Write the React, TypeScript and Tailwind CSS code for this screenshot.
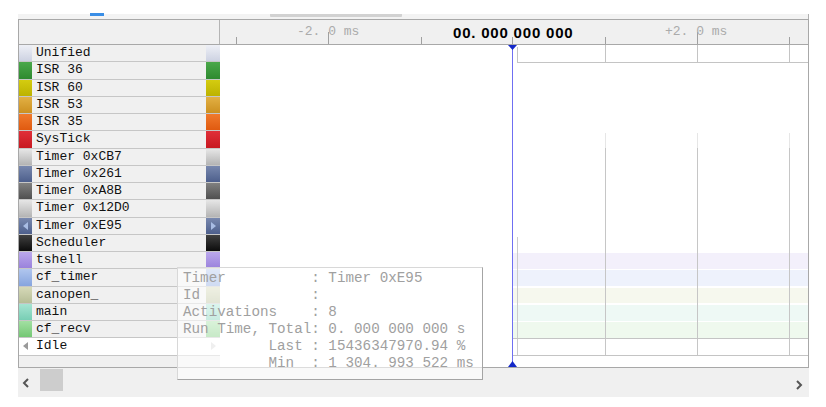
import React from "react";

type Row = {
  name: string;
  from: string;
  to: string;
  band?: string;
  mark?: "blue" | "idle";
};

const ROWS: Row[] = [
  { name: "Unified", from: "#eef0f6", to: "#cdd2e2" },
  { name: "ISR 36", from: "#4aa84a", to: "#2f8a30" },
  { name: "ISR 60", from: "#d4cc10", to: "#bcb200" },
  { name: "ISR 53", from: "#e2b044", to: "#cc9020" },
  { name: "ISR 35", from: "#f07a2c", to: "#e05a10" },
  { name: "SysTick", from: "#e0303a", to: "#c81820" },
  { name: "Timer 0xCB7", from: "#e6e6e6", to: "#b4b4b4" },
  { name: "Timer 0x261", from: "#7888ae", to: "#4d5f8c" },
  { name: "Timer 0xA8B", from: "#808080", to: "#505050" },
  { name: "Timer 0x12D0", from: "#e6e6e6", to: "#b4b4b4" },
  { name: "Timer 0xE95", from: "#7888ae", to: "#4d5f8c", mark: "blue" },
  { name: "Scheduler", from: "#404040", to: "#0c0c0c" },
  { name: "tshell", from: "#bba8ec", to: "#9a82dc", band: "#f3f0fb" },
  { name: "cf_timer", from: "#b0c6ee", to: "#86a4de", band: "#eef2fc" },
  { name: "canopen_", from: "#d6d9b8", to: "#b6bd96", band: "#f6f8ee" },
  { name: "main", from: "#a6e4d2", to: "#78ceb4", band: "#eef9f5" },
  { name: "cf_recv", from: "#a2e0a2", to: "#74c874", band: "#eff9ee" },
  { name: "Idle", from: "#ffffff", to: "#ffffff", mark: "idle" },
];

const RH = 17.25;
const GRID = [385, 477, 569];

function Arrow({ dir, color }: { dir: "l" | "r"; color: string }) {
  return (
    <svg width="6" height="8" viewBox="0 0 6 8">
      <polygon points={dir === "l" ? "5,0 5,8 0,4" : "1,0 1,8 6,4"} fill={color} />
    </svg>
  );
}

function Swatch({ row, side }: { row: Row; side: "l" | "r" }) {
  const w = side === "l" ? "w-[13px]" : "w-[14px]";
  return (
    <div
      className={`${w} h-full flex items-center justify-center shrink-0`}
      style={{ background: `linear-gradient(to bottom, ${row.from}, ${row.to})` }}
    >
      {row.mark === "blue" && <Arrow dir={side} color="#a9bde4" />}
      {row.mark === "idle" && <Arrow dir={side} color={side === "l" ? "#9a9a9a" : "#d6d6d6"} />}
    </div>
  );
}

function TimelineBody() {
  return (
    <svg width="588" height="322" className="block" shapeRendering="crispEdges">
      {/* unified row grid */}
      <line x1="297.5" y1="2" x2="297.5" y2="17" stroke="#c4c4c4" />
      {GRID.map((x) => (
        <line key={x} x1={x + 0.5} y1="0" x2={x + 0.5} y2="17" stroke="#c4c4c4" />
      ))}
      <line x1="297" y1="17.5" x2="588" y2="17.5" stroke="#c4c4c4" />

      {/* bands */}
      {ROWS.map((r, i) =>
        r.band ? (
          <rect key={r.name} x="293" y={i * RH + 1} width="295" height={RH - 1.5} fill={r.band} />
        ) : null
      )}

      {/* long grid */}
      {GRID.map((x) => (
        <g key={x}>
          <line x1={x + 0.5} y1="88" x2={x + 0.5} y2="103" stroke="#e6e6e6" />
          <line x1={x + 0.5} y1="103" x2={x + 0.5} y2="310" stroke="#c6c6c6" />
        </g>
      ))}
      <line x1="297.5" y1="192" x2="297.5" y2="310" stroke="#cccccc" />

      {/* idle row */}
      <line x1="293" y1="293.5" x2="588" y2="293.5" stroke="#c4c4c4" />
      <line x1="293" y1="310.5" x2="588" y2="310.5" stroke="#c4c4c4" />

      {/* cursor */}
      <line x1="292.5" y1="0" x2="292.5" y2="322" stroke="#6f6ff2" strokeWidth="1.2" />
      <polygon points="288,0 297,0 292.5,5" fill="#1428c8" shapeRendering="auto" />
      <polygon points="288,322 297,322 292.5,316" fill="#1428c8" shapeRendering="auto" />
    </svg>
  );
}

function TimelineHeader() {
  return (
    <div className="relative flex-1 h-full bg-[#f0f0f0]">
      <svg width="588" height="24" className="absolute left-0 top-0" shapeRendering="crispEdges">
        {[16, 201, 292, 385, 569].map((x) => (
          <line key={x} x1={x + 0.5} y1="17" x2={x + 0.5} y2="24" stroke="#a0a0a0" />
        ))}
        {[108, 477].map((x) => (
          <line key={x} x1={x + 0.5} y1="12" x2={x + 0.5} y2="24" stroke="#a0a0a0" />
        ))}
      </svg>
      <span className="absolute left-[77px] top-[4px] text-[13px] leading-[16px] text-[#ababab] font-['Liberation_Mono',monospace] whitespace-pre">
        -2. 0 ms
      </span>
      <span className="absolute left-[233px] top-[4px] text-[15px] leading-[17px] font-bold text-black font-['Liberation_Sans',Arial,sans-serif] whitespace-pre tracking-[0.8px]">
        00. 000 000 000
      </span>
      <span className="absolute left-[445px] top-[4px] text-[13px] leading-[16px] text-[#ababab] font-['Liberation_Mono',monospace] whitespace-pre">
        +2. 0 ms
      </span>
    </div>
  );
}

const TIP = [
  ["Timer", "Timer 0xE95"],
  ["Id", ""],
  ["Activations", "8"],
  ["Run Time, Total", "0. 000 000 000 s"],
  ["          Last", "15436347970.94 %"],
  ["          Min", "1 304. 993 522 ms"],
];

export default function App() {
  return (
    <div className="w-[826px] h-[407px] bg-white relative overflow-hidden font-['Liberation_Mono',monospace]">
      <div className="h-[14px]" />
      <div className="ml-[18px] w-[791px]">
        {/* tab strip */}
        <div className="h-[5px] bg-[#f3f3f3] border-r border-[#b0b0b0] flex items-start">
          <div className="ml-[72px] w-[14px] h-[3px] -mt-[1px] bg-[#3a8ee6]" />
          <div className="ml-[166px] w-[132px] h-[3px] bg-[#d2d2d2] rounded-b-[1px]" />
        </div>

        {/* main panel */}
        <div className="border border-[#a8a8a8] flex flex-col">
          <div className="h-[25px] flex border-b border-[#a8a8a8]">
            <div className="w-[201px] h-full bg-[#f0f0f0] border-r border-[#b4b4b4]" />
            <TimelineHeader />
          </div>
          <div className="flex h-[322px]">
            <div className="w-[201px] flex flex-col bg-[#f0f0f0]">
              {ROWS.map((r) => (
                <div
                  key={r.name}
                  className={`h-[17.25px] shrink-0 flex items-center border-b border-[#c6c6c6] ${
                    r.mark === "idle" ? "bg-white" : "bg-[#f0f0f0]"
                  }`}
                >
                  <Swatch row={r} side="l" />
                  <div className="flex-1 pl-[4px] text-[13px] leading-[16px] text-[#111] whitespace-pre">
                    {r.name}
                  </div>
                  <Swatch row={r} side="r" />
                </div>
              ))}
            </div>
            <div className="flex-1 bg-white">
              <TimelineBody />
            </div>
          </div>
        </div>

        {/* scrollbar */}
        <div className="h-[29px] bg-[#f0f0f0] flex items-start relative">
          <svg width="8" height="10" viewBox="0 0 8 10" className="ml-[4px] mt-[10px]">
            <polyline points="6,1 2,5 6,9" fill="none" stroke="#555" strokeWidth="2" />
          </svg>
          <div className="ml-[10px] mt-[1px] w-[23px] h-[22px] bg-[#cdcdcd]" />
          <div className="flex-1" />
          <svg width="8" height="10" viewBox="0 0 8 10" className="mr-[6px] mt-[12px]">
            <polyline points="2,1 6,5 2,9" fill="none" stroke="#555" strokeWidth="2" />
          </svg>
        </div>
      </div>

      {/* tooltip */}
      <div className="absolute left-[177px] top-[267px] w-[306px] h-[113px] bg-white/60 border-t border-l border-[#d8d8d8] border-r-[1.5px] border-b-[1.5px] border-r-[#a4a4a4] border-b-[#a4a4a4] pl-[5px] pt-[2px]">
        {TIP.map(([k, v]) => (
          <div key={k} className="h-[17px] text-[14.25px] leading-[17px] text-[#a0a0a0] whitespace-pre">
            {k.padEnd(15) + ":" + (v ? " " + v : "")}
          </div>
        ))}
      </div>
    </div>
  );
}
